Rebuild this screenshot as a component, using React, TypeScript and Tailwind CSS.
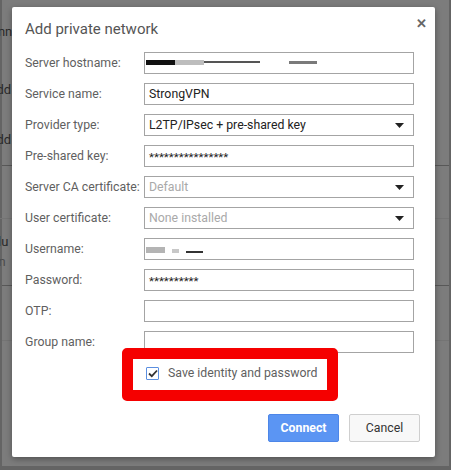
import React from "react"

const font = { fontFamily: "Roboto, 'Liberation Sans', Arial, sans-serif" }

function Caret() {
  return (
    <svg width="9" height="5" viewBox="0 0 9 5" className="shrink-0">
      <path d="M0 0 L9 0 L4.5 5 Z" fill="#222" />
    </svg>
  )
}

function Row({ label, children }: { label: string; children: React.ReactNode }) {
  return (
    <div className="flex h-[22px] items-center">
      <div className="w-[119px] whitespace-nowrap text-[12.3px] text-[#5f5f5f]">{label}</div>
      <div className="h-[22px] w-[270px] border border-[#a4a4a4] bg-white flex items-center px-[4px]">
        {children}
      </div>
    </div>
  )
}

export default function App() {
  return (
    <div
      className="relative h-[470px] w-[451px] overflow-hidden bg-[#7c7c7c]"
      style={font}
    >
      {/* page behind the backdrop */}
      <div className="flex h-full flex-col border-x-[2px] border-b-[4px] border-[#646464] text-[13px] leading-[15px] text-[#2a2a2a]">
        <div className="h-[24px]" />
        <div className="ml-[-20px] h-[58px]">Conn</div>
        <div className="ml-[-14px] h-[50px]">Add</div>
        <div className="ml-[-14px] h-[33px]">Add</div>
        <div className="h-[53px] border-t border-[#585858]" />
        <div className="ml-[-12px] h-[31px] border-t border-[#747474] pt-[15px]">Blu</div>
        <div className="ml-[-12px] h-[36px] pt-[5px] text-[#4c4c4c]">Un</div>
        <div className="h-[55px] border-t border-[#585858]" />
        <div className="flex-1 border-t border-[#747474]" />
      </div>

      {/* dialog */}
      <div className="absolute left-[12px] top-[7px] flex h-[450px] w-[423px] flex-col rounded-[2px] bg-white pl-[13px] pr-[21px] pt-[9px] shadow-[0_2px_6px_rgba(0,0,0,0.35)]">
        <div className="flex h-[26px] items-center justify-between">
          <div className="text-[15px] text-[#555]">Add private network</div>
          <div className="mr-[-13px] mt-[1px] self-start text-[13px] font-bold leading-none text-[#666]">✕</div>
        </div>

        <div className="mt-[10px] flex flex-col gap-[9px]">
          <Row label="Server hostname:">
            <div className="flex items-center pb-[2px]">
              <div className="ml-[-3px] h-[5px] w-[29px] bg-[#111]" />
              <div className="h-[5px] w-[29px] bg-[#bdbdbd]" />
              <div className="h-[2px] w-[56px] bg-[#555]" />
              <div className="ml-[29px] h-[3px] w-[28px] bg-[#7a7a7a]" />
            </div>
          </Row>
          <Row label="Service name:">
            <span className="text-[12.3px] text-[#222]">StrongVPN</span>
          </Row>
          <Row label="Provider type:">
            <span className="flex-1 text-[12.3px] text-[#222]">L2TP/IPsec + pre-shared key</span>
            <span className="mr-[5px]"><Caret /></span>
          </Row>
          <Row label="Pre-shared key:">
            <span className="pt-[3px] text-[11.5px] text-[#222]">****************</span>
          </Row>
          <Row label="Server CA certificate:">
            <span className="flex-1 text-[12.3px] text-[#a9a9a9]">Default</span>
            <span className="mr-[5px]"><Caret /></span>
          </Row>
          <Row label="User certificate:">
            <span className="flex-1 text-[12.3px] text-[#a9a9a9]">None installed</span>
            <span className="mr-[5px]"><Caret /></span>
          </Row>
          <Row label="Username:">
            <div className="flex items-end gap-[7px] pt-[2px]">
              <div className="ml-[-3px] h-[6px] w-[19px] bg-[#b4b4b4]" />
              <div className="h-[4px] w-[7px] bg-[#c8c8c8]" />
              <div className="h-[2px] w-[17px] bg-[#333]" />
            </div>
          </Row>
          <Row label="Password:">
            <span className="pt-[3px] text-[11.5px] text-[#222]">**********</span>
          </Row>
          <Row label="OTP:">
            <span />
          </Row>
          <Row label="Group name:">
            <span />
          </Row>
        </div>

        <div className="ml-[121px] mt-[11px] flex items-center gap-[9px]">
          <div className="flex h-[13px] w-[13px] items-center justify-center rounded-[1px] border border-[#5b8fe0] bg-white">
            <svg width="10" height="9" viewBox="0 0 10 9">
              <path d="M1 4.5 L3.8 7.2 L9 1.5" fill="none" stroke="#333" strokeWidth="1.8" />
            </svg>
          </div>
          <span className="text-[12.3px] text-[#5f5f5f]">Save identity and password</span>
        </div>

        <div className="mr-[-6px] mt-[32px] flex justify-end gap-[10px]">
          <button className="h-[28px] w-[71px] rounded-[2px] border border-[#4d86e8] bg-[#5b95f3] text-[12.3px] font-bold text-white">
            Connect
          </button>
          <button className="h-[28px] w-[71px] rounded-[2px] border border-[#cfcfcf] bg-[#f8f8f8] text-[12.3px] text-[#333]">
            Cancel
          </button>
        </div>
      </div>

      {/* highlight annotation */}
      <div className="absolute left-[122px] top-[348px] h-[53px] w-[216px] rounded-[5px] border-[11px] border-[#f50000]" />
    </div>
  )
}
